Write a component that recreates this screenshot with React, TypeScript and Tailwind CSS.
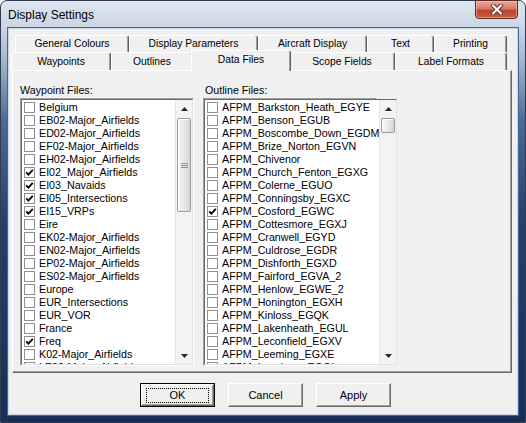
import React from "react";

const ui = "font-['Liberation_Sans',Arial,sans-serif]";

const WAYPOINTS: [string, boolean][] = [
  ["Belgium", false],
  ["EB02-Major_Airfields", false],
  ["ED02-Major_Airfields", false],
  ["EF02-Major_Airfields", false],
  ["EH02-Major_Airfields", false],
  ["EI02_Major_Airfields", true],
  ["EI03_Navaids", true],
  ["EI05_Intersections", true],
  ["EI15_VRPs", true],
  ["Eire", false],
  ["EK02-Major_Airfields", false],
  ["EN02-Major_Airfields", false],
  ["EP02-Major_Airfields", false],
  ["ES02-Major_Airfields", false],
  ["Europe", false],
  ["EUR_Intersections", false],
  ["EUR_VOR", false],
  ["France", false],
  ["Freq", true],
  ["K02-Major_Airfields", false],
  ["LE02-Major_Airfields", false],
];

const OUTLINES: [string, boolean][] = [
  ["AFPM_Barkston_Heath_EGYE", false],
  ["AFPM_Benson_EGUB", false],
  ["AFPM_Boscombe_Down_EGDM", false],
  ["AFPM_Brize_Norton_EGVN", false],
  ["AFPM_Chivenor", false],
  ["AFPM_Church_Fenton_EGXG", false],
  ["AFPM_Colerne_EGUO", false],
  ["AFPM_Conningsby_EGXC", false],
  ["AFPM_Cosford_EGWC", true],
  ["AFPM_Cottesmore_EGXJ", false],
  ["AFPM_Cranwell_EGYD", false],
  ["AFPM_Culdrose_EGDR", false],
  ["AFPM_Dishforth_EGXD", false],
  ["AFPM_Fairford_EGVA_2", false],
  ["AFPM_Henlow_EGWE_2", false],
  ["AFPM_Honington_EGXH", false],
  ["AFPM_Kinloss_EGQK", false],
  ["AFPM_Lakenheath_EGUL", false],
  ["AFPM_Leconfield_EGXV", false],
  ["AFPM_Leeming_EGXE", false],
  ["AFPM_Leuchars_EGQL", false],
];

function CheckBox({ on }: { on: boolean }) {
  return (
    <span className="flex h-[11px] w-[11px] shrink-0 items-center justify-center border border-[#8f8f8f] bg-white">
      {on && (
        <svg width="9" height="9" viewBox="0 0 9 9">
          <path d="M1.2 4.3 L3.4 6.6 L7.8 1.8" fill="none" stroke="#000" strokeWidth="1.8" />
        </svg>
      )}
    </span>
  );
}

function Arrow({ down }: { down?: boolean }) {
  return (
    <div className="flex h-[17px] shrink-0 items-center justify-center">
      <svg width="7" height="4" viewBox="0 0 7 4">
        <path d={down ? "M0 0 L7 0 L3.5 4Z" : "M0 4 L3.5 0 L7 4Z"} fill="#262626" />
      </svg>
    </div>
  );
}

function ScrollBar({ thumb, grip }: { thumb: string; grip?: boolean }) {
  return (
    <div className="flex w-[17px] shrink-0 flex-col border-l border-[#e6e6e6] bg-[#f3f3f3]">
      <Arrow />
      <div
        className={`mx-px mt-px ${thumb} flex flex-col items-center justify-center gap-[1px] rounded-[2px] border border-[#9a9a9a] bg-gradient-to-r from-[#f6f6f6] via-[#e9e9e9] to-[#d4d4d4] shadow-[inset_1px_1px_0_#ffffff]`}
      >
        {grip && (
          <>
            <span className="h-px w-[7px] bg-[#8c8c8c]" />
            <span className="h-px w-[7px] bg-[#8c8c8c]" />
            <span className="h-px w-[7px] bg-[#8c8c8c]" />
          </>
        )}
      </div>
      <div className="flex-1" />
      <Arrow down />
    </div>
  );
}

function FileList({ items, thumb, grip }: { items: [string, boolean][]; thumb: string; grip?: boolean }) {
  return (
    <div className="flex h-[268px] w-[174px] border border-t-[#a0a0a0] border-l-[#a0a0a0] border-r-white border-b-white">
      <div className="flex flex-1 border border-t-[#696969] border-l-[#696969] border-r-[#e3e3e3] border-b-[#e3e3e3] bg-white">
        <div className="flex-1 overflow-hidden pt-px">
          {items.map(([name, on]) => (
            <div key={name} className="flex h-[13px] items-center gap-[4px] whitespace-nowrap pl-[2px] text-[10.7px] leading-[13px] text-black">
              <CheckBox on={on} />
              <span>{name}</span>
            </div>
          ))}
        </div>
        <ScrollBar thumb={thumb} grip={grip} />
      </div>
    </div>
  );
}

const tabBase =
  "flex items-center justify-center rounded-t-[3px] border-t border-l border-r border-t-white border-l-white border-r-[#5f5f5f] bg-[#f0f0f0] shadow-[inset_-1px_0_0_#a0a0a0] text-[10.3px] text-black";

function Button({ label, primary }: { label: string; primary?: boolean }) {
  const inner = (
    <div className="flex h-full w-full items-center justify-center border border-t-white border-l-white border-r-[#696969] border-b-[#696969] bg-[#f0f0f0] shadow-[inset_-1px_-1px_0_#a0a0a0] text-[11px] text-black">
      {primary ? (
        <div className="flex h-[15px] w-[63px] items-center justify-center border border-dotted border-black">{label}</div>
      ) : (
        label
      )}
    </div>
  );
  return (
    <div className={`h-[24px] w-[75px] ${primary ? "border border-black" : ""}`}>{inner}</div>
  );
}

export default function App() {
  return (
    <div className={`h-[423px] w-[526px] ${ui}`}>
      <div className="flex h-full w-full flex-col rounded-t-[7px] border border-[#2e3d52] bg-[linear-gradient(180deg,#dde6ef_0px,#c9d6e3_28px,#a3b6cc_60px,#4b6a93_120px,#24416b_220px,#172f56_423px)]">
        {/* title bar */}
        <div className="flex h-[27px] shrink-0 items-start justify-between">
          <div className="flex h-[27px] items-center pl-[7px] text-[12px] text-black">Display Settings</div>
          <div className="mr-[7px] mt-[-1px] flex h-[19px] w-[43px] items-center justify-center rounded-b-[4px] border border-[#5b2a22] bg-[linear-gradient(180deg,#e9a999_0%,#d67a68_45%,#c0442e_55%,#c85a3e_100%)] shadow-[inset_0_0_0_1px_rgba(255,220,210,0.45)]">
            <svg width="12" height="11" viewBox="0 0 12 11">
              <path d="M2 1.5 L10 9.5 M10 1.5 L2 9.5" stroke="#6b2a20" strokeWidth="4" strokeLinecap="round" />
              <path d="M2 1.5 L10 9.5 M10 1.5 L2 9.5" stroke="#ffffff" strokeWidth="2.2" strokeLinecap="round" />
            </svg>
          </div>
        </div>

        {/* client area */}
        <div className="mx-[7px] flex h-[387px] flex-col border border-[#c9d5e2] bg-[#f0f0f0] shadow-[0_0_0_1px_#41689a]">
          <div className="ml-[3px] mt-[6px] w-[500px]">
            {/* back tab row */}
            <div className="flex h-[17px] pl-[3px]">
              <div className={`${tabBase} w-[114px]`}>General Colours</div>
              <div className={`${tabBase} w-[129px]`}>Display Parameters</div>
              <div className={`${tabBase} w-[109px]`}>Aircraft Display</div>
              <div className={`${tabBase} w-[67px]`}>Text</div>
              <div className={`${tabBase} w-[73px]`}>Printing</div>
            </div>
            {/* front tab row */}
            <div className="ml-[-1px] flex h-[18px]">
              <div className={`${tabBase} w-[100px] pt-[1px]`}>Waypoints</div>
              <div className={`${tabBase} w-[82px] pt-[1px]`}>Outlines</div>
              <div className={`${tabBase} relative z-10 -mx-[2px] -mt-[2px] h-[21px] w-[100px] pb-[2px]`}>Data Files</div>
              <div className={`${tabBase} w-[106px] pt-[1px]`}>Scope Fields</div>
              <div className={`${tabBase} w-[112px] pt-[1px]`}>Label Formats</div>
            </div>
            {/* pane */}
            <div className="flex h-[303px] gap-[9px] border border-t-white border-l-white border-r-[#696969] border-b-[#696969] bg-[#f0f0f0] pl-[7px] pt-[13px] shadow-[inset_-1px_-1px_0_#a0a0a0]">
              <div className="flex flex-col">
                <div className="h-[13px] text-[10.7px] leading-[13px] text-black">Waypoint Files:</div>
                <div className="mt-px">
                  <FileList items={WAYPOINTS} thumb="h-[94px]" grip />
                </div>
              </div>
              <div className="flex flex-col">
                <div className="h-[13px] pl-[2px] text-[10.7px] leading-[13px] text-black">Outline Files:</div>
                <div className="mt-px">
                  <FileList items={OUTLINES} thumb="h-[15px]" />
                </div>
              </div>
            </div>
          </div>

          {/* buttons */}
          <div className="mt-[10px] flex gap-[13px] pl-[131px]">
            <Button label="OK" primary />
            <Button label="Cancel" />
            <Button label="Apply" />
          </div>
        </div>
      </div>
    </div>
  );
}
